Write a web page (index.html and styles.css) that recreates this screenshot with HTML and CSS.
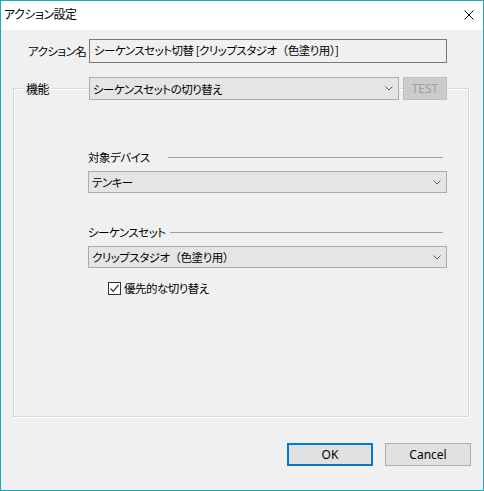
FILE: index.html
```html
<!DOCTYPE html>
<html lang="ja">
<head>
<meta charset="utf-8">
<title>アクション設定</title>
<link rel="stylesheet" href="styles.css">
</head>
<body>
<div class="window">
  <div class="titlebar">
    <span class="title">アクション設定</span>
    <span class="close">
      <svg width="10" height="10" viewBox="0 0 10 10"><path d="M0.5 0.5 L9.5 9.5 M9.5 0.5 L0.5 9.5" stroke="#000" stroke-width="1" fill="none"/></svg>
    </span>
  </div>
  <div class="body">
    <div class="name-row">
      <span class="name-label">アクション名</span>
      <div class="textbox">シーケンスセット切替 [クリップスタジオ<span class="fw">（</span>色塗り用<span class="fw">）</span>]</div>
    </div>
    <div class="group">
      <div class="group-head">
        <span class="group-label">機能</span>
        <div class="combo head-combo">
          <span class="combo-text">シーケンスセットの切り替え</span>
          <svg class="chev" width="8" height="5" viewBox="0 0 8 5"><path d="M0.5 0.5 L4 4 L7.5 0.5" stroke="#5a5a5a" stroke-width="1" fill="none"/></svg>
        </div>
        <div class="btn-test">TEST</div>
      </div>
      <div class="section first">
        <div class="section-title"><span class="st-label dev">対象デバイス</span><span class="rule"></span></div>
        <div class="combo">
          <span class="combo-text">テンキー</span>
          <svg class="chev" width="8" height="5" viewBox="0 0 8 5"><path d="M0.5 0.5 L4 4 L7.5 0.5" stroke="#5a5a5a" stroke-width="1" fill="none"/></svg>
        </div>
      </div>
      <div class="section second">
        <div class="section-title"><span class="st-label seq">シーケンスセット</span><span class="rule"></span></div>
        <div class="combo">
          <span class="combo-text">クリップスタジオ<span class="fw">（</span>色塗り用<span class="fw">）</span></span>
          <svg class="chev" width="8" height="5" viewBox="0 0 8 5"><path d="M0.5 0.5 L4 4 L7.5 0.5" stroke="#5a5a5a" stroke-width="1" fill="none"/></svg>
        </div>
        <div class="check-row">
          <span class="checkbox">
            <svg width="11" height="11" viewBox="0 0 11 11"><path d="M1.5 5.5 L4.2 8.3 L9.5 2" stroke="#333" stroke-width="1.2" fill="none"/></svg>
          </span>
          <span class="check-label">優先的な切り替え</span>
        </div>
      </div>
    </div>
    <div class="buttons">
      <div class="btn ok">OK</div>
      <div class="btn">Cancel</div>
    </div>
  </div>
</div>
</body>
</html>
```
FILE: styles.css
```css
* { box-sizing: border-box; }
html, body { margin: 0; padding: 0; }
body {
  width: 484px;
  height: 491px;
  font-family: "Noto Sans CJK JP", "Noto Sans", sans-serif;
  font-size: 11.5px;
  font-feature-settings: "palt";
  letter-spacing: -0.5px;
  color: #000;
  background: #f0f0f0;
}
.fw { font-feature-settings: normal; }
.window {
  width: 484px;
  height: 491px;
  border: 1px solid #19a9bc;
  display: flex;
  flex-direction: column;
  background: #f0f0f0;
}
.titlebar {
  height: 29px;
  background: #fff;
  display: flex;
  align-items: center;
  justify-content: space-between;
  padding: 0 9px 4px 3px;
  flex: none;
}
.title { line-height: 16px; white-space: nowrap; font-size: 12px; }
.close { display: flex; margin-top: 2px; }
.body {
  flex: 1;
  display: flex;
  flex-direction: column;
}
.name-row {
  margin-top: 9px;
  padding-left: 27px;
  display: flex;
  align-items: center;
}
.name-label { width: 61px; line-height: 16px; white-space: nowrap; }
.textbox {
  width: 358px;
  height: 24px;
  border: 1px solid #7a7a7a;
  background: #f0f0f0;
  padding: 0 4px;
  line-height: 21px;
  white-space: nowrap;
}
.group {
  margin: 25px 0 0 12px;
  width: 456px;
  height: 329px;
  border: 1px solid #d8d8d8;
  box-shadow: inset 1px 1px 0 #fff, 1px 1px 0 #fff;
  display: flex;
  flex-direction: column;
}
.group-head {
  margin-top: -12px;
  height: 23px;
  display: flex;
  align-items: center;
  padding-left: 10px;
}
.group-label {
  background: #f0f0f0;
  padding: 0 2px;
  width: 28px;
  line-height: 16px;
  margin-right: 37px;
  white-space: nowrap;
  font-size: 12px;
}
.combo {
  height: 22px;
  border: 1px solid #acacac;
  background: #e5e5e5;
  display: flex;
  align-items: center;
  justify-content: space-between;
  padding: 0 5px 0 3px;
  white-space: nowrap;
}
.head-combo { width: 310px; height: 23px; }
.combo-text { line-height: 16px; }
.chev { flex: none; }
.btn-test {
  margin-left: 4px;
  width: 44px;
  height: 23px;
  background: #cccccc;
  border: 1px solid #bfbfbf;
  color: #a0a0a0;
  font-family: "Noto Sans", sans-serif;
  font-size: 12px;
  letter-spacing: 0;
  display: flex;
  align-items: center;
  justify-content: center;
}
.section {
  margin-left: 74px;
  width: 359px;
  display: flex;
  flex-direction: column;
}
.section.first { margin-top: 49px; }
.section.second { margin-top: 31px; }
.section-title {
  height: 16px;
  display: flex;
  align-items: center;
  margin-bottom: 6px;
}
.st-label { line-height: 16px; white-space: nowrap; flex: none; }
.st-label.dev { width: 80px; }
.st-label.seq { width: 82px; }
.rule {
  flex: 1;
  height: 1px;
  background: #a0a0a0;
  margin-right: 4px;
}
.check-row {
  margin-top: 12px;
  padding-left: 20px;
  height: 16px;
  display: flex;
  align-items: center;
}
.checkbox {
  width: 13px;
  height: 13px;
  border: 1px solid #333;
  background: #fff;
  display: flex;
  align-items: center;
  justify-content: center;
  margin-right: 3px;
}
.check-label { line-height: 16px; white-space: nowrap; }
.buttons {
  margin-top: 26px;
  display: flex;
  justify-content: flex-end;
  gap: 12px;
  padding-right: 12px;
}
.btn {
  width: 86px;
  height: 23px;
  border: 1px solid #adadad;
  background: #e1e1e1;
  font-family: "Noto Sans", sans-serif;
  font-size: 12px;
  letter-spacing: 0;
  display: flex;
  align-items: center;
  justify-content: center;
}
.btn.ok { border: 2px solid #0078d7; }
```
